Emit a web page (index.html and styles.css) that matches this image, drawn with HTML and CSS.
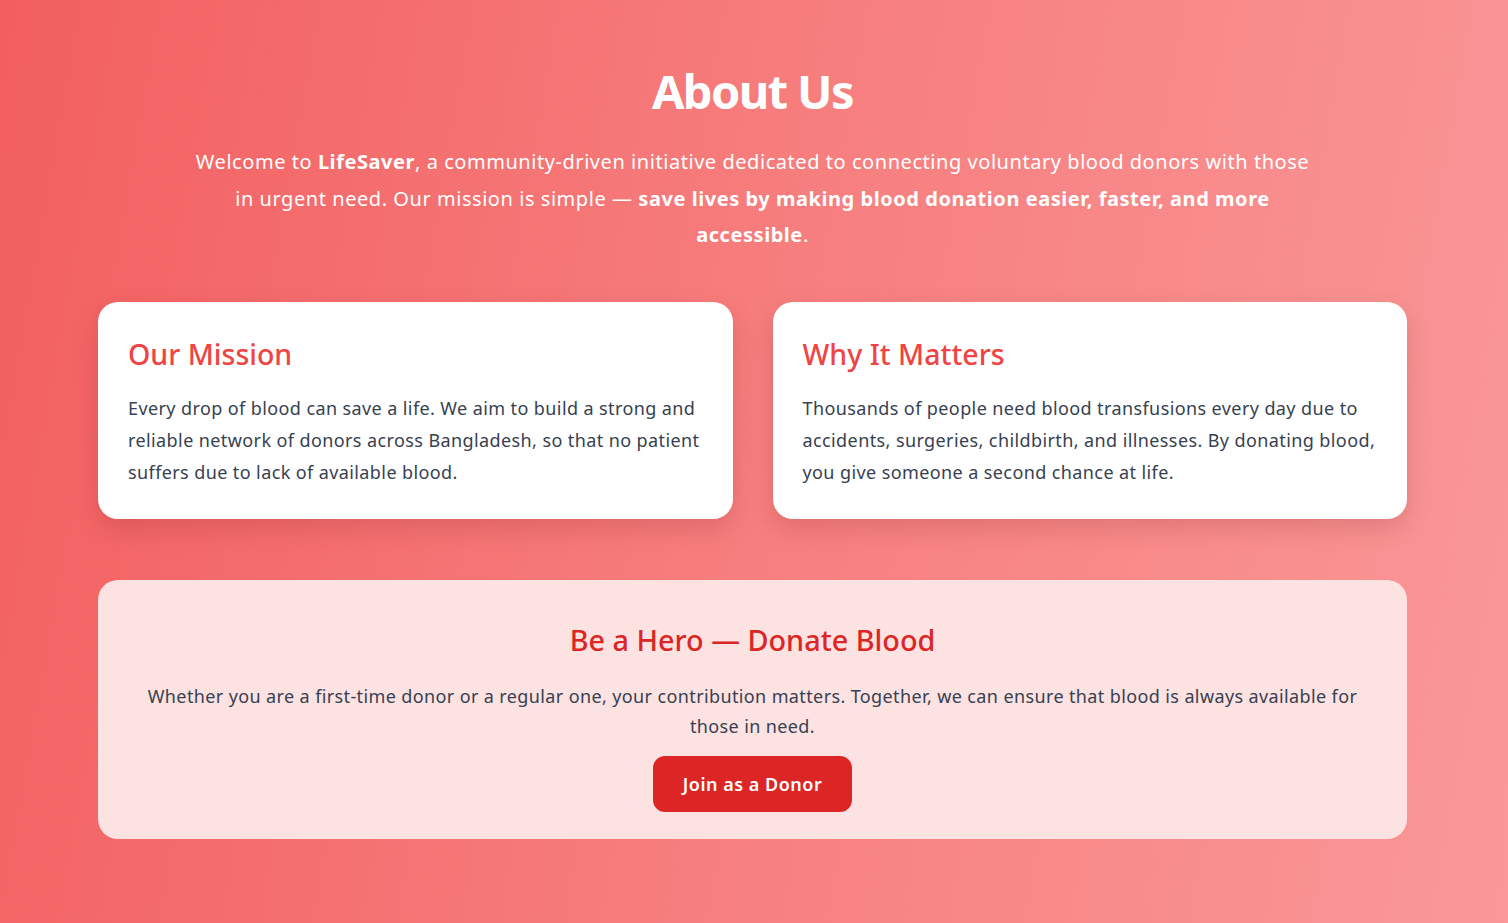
FILE: index.html
```html
<!DOCTYPE html>
<html lang="en">
<head>
<meta charset="utf-8">
<title>About Us - LifeSaver</title>
<link rel="stylesheet" href="styles.css">
</head>
<body>
<section class="about">
  <div class="container">
    <h1 class="title">About Us</h1>
    <p class="intro">Welcome to <strong>LifeSaver</strong>, a community-driven initiative dedicated to connecting voluntary blood donors with those in urgent need. Our mission is simple — <strong>save lives by making blood donation easier, faster, and more accessible</strong>.</p>

    <div class="cards">
      <div class="card">
        <h2 class="card-title">Our Mission</h2>
        <p class="card-text">Every drop of blood can save a life. We aim to build a strong and reliable network of donors across Bangladesh, so that no patient suffers due to lack of available blood.</p>
      </div>
      <div class="card">
        <h2 class="card-title">Why It Matters</h2>
        <p class="card-text">Thousands of people need blood transfusions every day due to accidents, surgeries, childbirth, and illnesses. By donating blood, you give someone a second chance at life.</p>
      </div>
    </div>

    <div class="cta">
      <h2 class="cta-title">Be a Hero — Donate Blood</h2>
      <p class="cta-text">Whether you are a first-time donor or a regular one, your contribution matters. Together, we can ensure that blood is always available for those in need.</p>
      <a class="btn" href="#">Join as a Donor</a>
    </div>
  </div>
</section>
</body>
</html>
```
FILE: styles.css
```css
* { box-sizing: border-box; }
html, body { margin: 0; padding: 0; }
body {
  font-family: "Segoe UI", "Noto Sans", "Open Sans", sans-serif;
  color: #374151;
}
.about {
  min-height: 923px;
  background: linear-gradient(100deg, #f25f60 0%, #f77e7e 50%, #fa9898 100%);
  padding: 62px 101px 60px 98px;
}
.container {
  display: flex;
  flex-direction: column;
  align-items: center;
}
.title {
  margin: 0 0 24px;
  font-size: 47px;
  line-height: 58px;
  font-weight: 700;
  letter-spacing: -1.6px;
  color: #fff;
  text-align: center;
}
.intro {
  margin: 0;
  max-width: 1126px;
  font-size: 20px;
  line-height: 36.5px;
  letter-spacing: 0.55px;
  color: #fff;
  text-align: center;
}
.intro strong { font-weight: 700; letter-spacing: 0.55px; }
.cards {
  margin-top: 48px;
  width: 100%;
  display: grid;
  grid-template-columns: 1fr 1fr;
  gap: 40px;
}
.card {
  background: #fff;
  border-radius: 20px;
  padding: 32px 26px 30px 30px;
  box-shadow: 0 10px 24px rgba(120, 30, 30, 0.18);
}
.card-title {
  margin: 0 0 18px;
  font-size: 28.5px;
  line-height: 40px;
  font-weight: 500;
  color: #ef4444;
}
.card-text {
  margin: 0;
  font-size: 18px;
  line-height: 32.4px;
  letter-spacing: 0.4px;
  color: #374151;
}
.cta {
  margin-top: 61px;
  width: 100%;
  background: #fde2e2;
  border-radius: 20px;
  padding: 40px 40px 27px;
  text-align: center;
}
.cta-title {
  margin: 0 0 21px;
  font-size: 28.8px;
  line-height: 40px;
  font-weight: 500;
  color: #dc2626;
}
.cta-text {
  margin: 0 0 15px;
  font-size: 18px;
  line-height: 30px;
  letter-spacing: 0.38px;
  color: #374151;
}
.btn {
  display: inline-block;
  height: 56px;
  padding: 0 30px;
  line-height: 56px;
  border-radius: 12px;
  background: #dc2626;
  color: #fff;
  font-size: 18px;
  font-weight: 600;
  letter-spacing: 0.5px;
  text-decoration: none;
}
```
